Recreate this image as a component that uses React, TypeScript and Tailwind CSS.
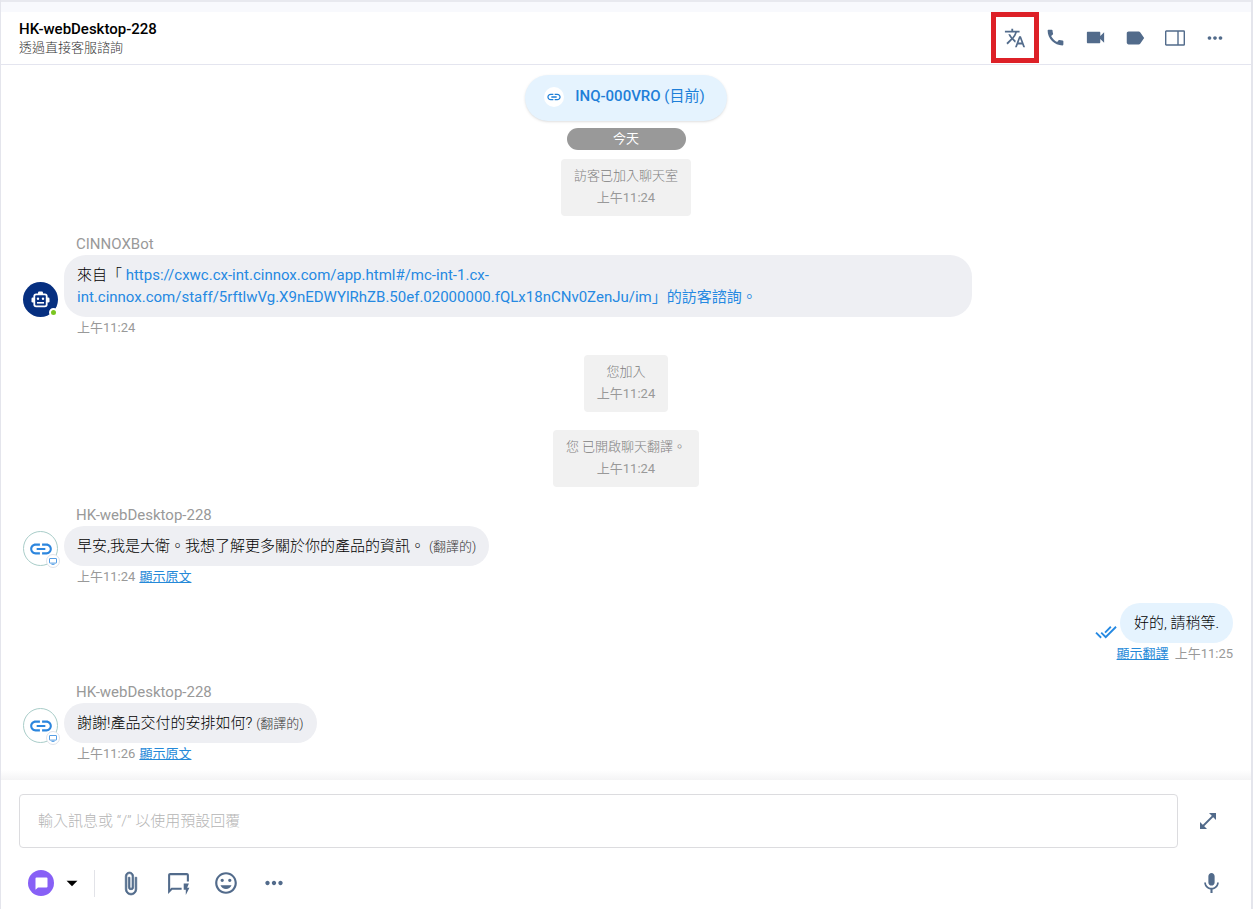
import type { ReactNode } from "react";
import {
  MdArrowDropDown,
  MdCall,
  MdDoneAll,
  MdInsertEmoticon,
  MdLabel,
  MdLink,
  MdMic,
  MdMoreHoriz,
  MdOutlineQuickreply,
  MdTranslate,
  MdVideocam,
} from "react-icons/md";

function PanelIcon() {
  return (
    <svg width="20" height="16" viewBox="0 0 20 16" fill="none" stroke="currentColor" strokeWidth="1.4">
      <rect x="0.7" y="1" width="18.6" height="14" rx="0.6" />
      <path d="M13 1v14" />
    </svg>
  );
}

function ExpandIcon() {
  return (
    <svg width="16" height="16" viewBox="0 0 16 16" fill="currentColor">
      <path d="M9 0h7v7z" />
      <path d="M0 9v7h7z" />
      <path d="M2.5 13.5l11-11" stroke="currentColor" strokeWidth="1.8" />
    </svg>
  );
}

function ClipIcon() {
  return (
    <svg width="25" height="25" viewBox="0 0 24 24" fill="currentColor" stroke="currentColor" strokeWidth="0.7">
      <path d="M16.5 6v11.5c0 2.21-1.79 4-4 4s-4-1.79-4-4V5a2.500 2.500 0 0 1 5 0v10.500c0 .55-.45 1-1 1s-1-.45-1-1V6H10v9.500a2.500 2.500 0 0 0 5 0V5c0-2.210-1.790-4-4-4S7 2.790 7 5v12.500c0 3.040 2.460 5.500 5.500 5.500s5.500-2.460 5.500-5.500V6h-1.500z" />
    </svg>
  );
}

function RobotIcon() {
  return (
    <svg width="19" height="17" viewBox="0 0 19 17" fill="currentColor">
      <rect x="7" y="0.5" width="5" height="3" rx="1.2" />
      <rect x="0.5" y="6.5" width="3" height="5" rx="1.2" />
      <rect x="15.5" y="6.5" width="3" height="5" rx="1.2" />
      <rect x="3.3" y="3.3" width="12.4" height="12" rx="1.8" fill="none" stroke="currentColor" strokeWidth="1.8" />
      <circle cx="7" cy="7.8" r="1.2" />
      <circle cx="12" cy="7.8" r="1.2" />
      <rect x="6" y="11" width="7" height="1.6" />
    </svg>
  );
}

function ChatIcon() {
  return (
    <svg width="13" height="13" viewBox="0 0 13 13" fill="currentColor">
      <path d="M1.5 0.5h10a1 1 0 0 1 1 1v8a1 1 0 0 1-1 1h-8.500l-2.500 2.200v-11.200a1 1 0 0 1 1-1z" />
    </svg>
  );
}

function HeaderButton({ label, children }: { label: string; children: ReactNode }) {
  return (
    <button aria-label={label} className="relative flex h-[51px] w-10 items-center justify-center">
      {children}
    </button>
  );
}

function ToolButton({ label, children }: { label: string; children: ReactNode }) {
  return (
    <button aria-label={label} className="flex h-10 w-12 items-center justify-center">
      {children}
    </button>
  );
}

function Notice({ text, time }: { text: string; time: string }) {
  return (
    <div className="my-px mr-1 self-center rounded bg-[#f1f1f1] px-[13px] pt-1.5 pb-[7px] text-center text-[13px] leading-[22px] text-[#999]">
      <p className="font-light text-[#808080]">{text}</p>
      <p>{time}</p>
    </div>
  );
}

function BotAvatar() {
  return (
    <div className="relative flex size-[35px] shrink-0 items-center justify-center rounded-full bg-[#062f80] text-white">
      <RobotIcon />
      <span className="absolute right-0 bottom-0 size-[9px] rounded-full border-2 border-white bg-[#7ac520]" />
    </div>
  );
}

function VisitorAvatar() {
  return (
    <div className="relative flex size-[35px] shrink-0 items-center justify-center rounded-full border border-[#a9cdc9] bg-white text-[#2c86de]">
      <MdLink size={26} />
      <span className="absolute -right-[3px] -bottom-[3px] flex size-[14px] items-center justify-center rounded-full border border-[#dfe3ea] bg-white">
        <svg width="8" height="7" viewBox="0 0 8 7" fill="none" stroke="currentColor" strokeWidth="0.8">
          <rect x="0.5" y="0.5" width="7" height="4.6" rx="0.4" />
          <path d="M2.500 6.400h3" />
        </svg>
      </span>
    </div>
  );
}

interface IncomingProps {
  name: string;
  time: string;
  avatar: ReactNode;
  translated?: boolean;
  children: ReactNode;
}

function Incoming({ name, time, avatar, translated, children }: IncomingProps) {
  return (
    <div>
      <p className="pl-[53px] text-[15px] leading-[22px] text-[#999]">{name}</p>
      <div className="flex items-end gap-1.5">
        {avatar}
        <div className="max-w-[75%] rounded-[22px] bg-[#eeeff3] px-[13px] py-[9px] text-[15px] leading-[22px] font-light text-black">
          {children}
          {translated && <span className="ml-1 text-[13px] leading-5 text-[#333]">(翻譯的)</span>}
        </div>
      </div>
      <p className="pl-[54px] text-[13px] leading-[21px] text-[#999]">
        {time}
        {translated && (
          <a href="#" className="ml-1 text-[#2589d8] underline">
            顯示原文
          </a>
        )}
      </p>
    </div>
  );
}

function App() {
  return (
    <div className="flex min-h-screen flex-col border-r-2 border-l border-x-[#e4e5ec] bg-[#f8f9fd] font-['Roboto','Noto_Sans_CJK_TC',sans-serif]">
      <div className="h-3 border-t-2 border-[#e8e9ef]" />

      <header className="flex items-start justify-between border-b border-[#e4e5ef] bg-white pr-4 pl-[18px]">
        <div className="pt-2 pb-1.5">
          <h1 className="text-[15px] leading-[18px] font-medium text-black">HK-webDesktop-228</h1>
          <p className="text-[13px] leading-5 font-light text-[#333]">透過直接客服諮詢</p>
        </div>
        <div className="flex text-[#526b8b]">
          <HeaderButton label="翻譯">
            <MdTranslate size={22} />
            <span className="absolute inset-y-0 -inset-x-1 border-[5px] border-[#dd2027]" />
          </HeaderButton>
          <HeaderButton label="通話">
            <MdCall size={21} />
          </HeaderButton>
          <HeaderButton label="視訊">
            <MdVideocam size={23} />
          </HeaderButton>
          <HeaderButton label="標籤">
            <MdLabel size={22} />
          </HeaderButton>
          <HeaderButton label="側欄">
            <PanelIcon />
          </HeaderButton>
          <HeaderButton label="更多">
            <MdMoreHoriz size={22} />
          </HeaderButton>
        </div>
      </header>

      <main className="relative flex grow flex-col gap-4 bg-white pt-2.5 pr-[18px] pb-[15px] pl-[22px]">
        <div className="-mb-2 flex flex-col items-center gap-[7px] pr-1">
          <button className="flex h-[46px] items-center gap-[11px] rounded-full bg-[#e5f3fe] pr-[22px] pb-[3px] pl-[19px] text-[15px] font-medium text-[#1e7fd8] shadow">
            <span className="flex size-5 items-center justify-center rounded-full bg-white">
              <MdLink size={16} />
            </span>
            <span>
              INQ-000VRO <span className="font-normal">(目前)</span>
            </span>
          </button>
          <div className="w-[119px] rounded-full bg-[#999] text-center text-[13px] leading-[22px] text-white">
            今天
          </div>
        </div>

        <Notice text="訪客已加入聊天室" time="上午11:24" />

        <Incoming name="CINNOXBot" time="上午11:24" avatar={<BotAvatar />}>
          來自「{" "}
          <a href="#" className="font-normal text-[#2589e2]">
            https://cxwc.cx-int.cinnox.com/app.html#/mc-int-1.cx-int.cinnox.com/staff/5rftlwVg.X9nEDWYlRhZB.50ef.02000000.fQLx18nCNv0ZenJu/im」的訪客諮詢。
          </a>
        </Incoming>

        <Notice text="您加入" time="上午11:24" />
        <Notice text="您 已開啟聊天翻譯。" time="上午11:24" />

        <Incoming name="HK-webDesktop-228" time="上午11:24" avatar={<VisitorAvatar />} translated>
          早安,我是大衛。我想了解更多關於你的產品的資訊。
        </Incoming>

        <div>
          <div className="flex items-end justify-end gap-[3px]">
            <MdDoneAll size={22} className="text-[#2589e2]" />
            <div className="rounded-[22px] bg-[#e5f3fe] px-3.5 py-[9px] text-[15px] leading-[22px] font-light text-black">
              好的, 請稍等.
            </div>
          </div>
          <p className="text-right text-[13px] leading-[22px] text-[#999]">
            <a href="#" className="mr-1.5 text-[#2589d8] underline">
              顯示翻譯
            </a>
            上午11:25
          </p>
        </div>

        <Incoming name="HK-webDesktop-228" time="上午11:26" avatar={<VisitorAvatar />} translated>
          謝謝!產品交付的安排如何?
        </Incoming>

        <div className="absolute inset-x-0 bottom-0 h-2.5 bg-linear-to-b from-white to-[#f4f4f5]" />
      </main>

      <footer className="bg-white pt-3.5 pr-4 pb-1.5 pl-[18px]">
        <div className="flex items-center">
          <input
            type="text"
            aria-label="訊息"
            placeholder={"輸入訊息或 “/” 以使用預設回覆"}
            className="h-[54px] min-w-0 grow rounded border border-[#dcdcdf] bg-white px-[18px] text-[15px] font-light placeholder:text-[#b5b5b5]"
          />
          <button
            aria-label="展開"
            className="mr-[3px] ml-1.5 flex size-12 items-center justify-center text-[#526b8b]"
          >
            <ExpandIcon />
          </button>
        </div>
        <div className="mt-[15px] flex items-center text-[#526b8b]">
          <button aria-label="選擇頻道" className="flex items-center gap-[5px] pl-[9px]">
            <span className="flex size-[26px] items-center justify-center rounded-full bg-[#8760f6] text-white">
              <ChatIcon />
            </span>
            <MdArrowDropDown size={26} className="text-black" />
          </button>
          <span className="mr-[11px] ml-[9px] h-[27px] w-px bg-[#e2e3e8]" />
          <ToolButton label="附加檔案">
            <ClipIcon />
          </ToolButton>
          <ToolButton label="預設回覆">
            <MdOutlineQuickreply size={25} />
          </ToolButton>
          <ToolButton label="表情符號">
            <MdInsertEmoticon size={26} />
          </ToolButton>
          <ToolButton label="更多工具">
            <MdMoreHoriz size={26} />
          </ToolButton>
          <div className="grow" />
          <ToolButton label="錄音">
            <MdMic size={25} />
          </ToolButton>
        </div>
      </footer>
    </div>
  );
}

export default App;
